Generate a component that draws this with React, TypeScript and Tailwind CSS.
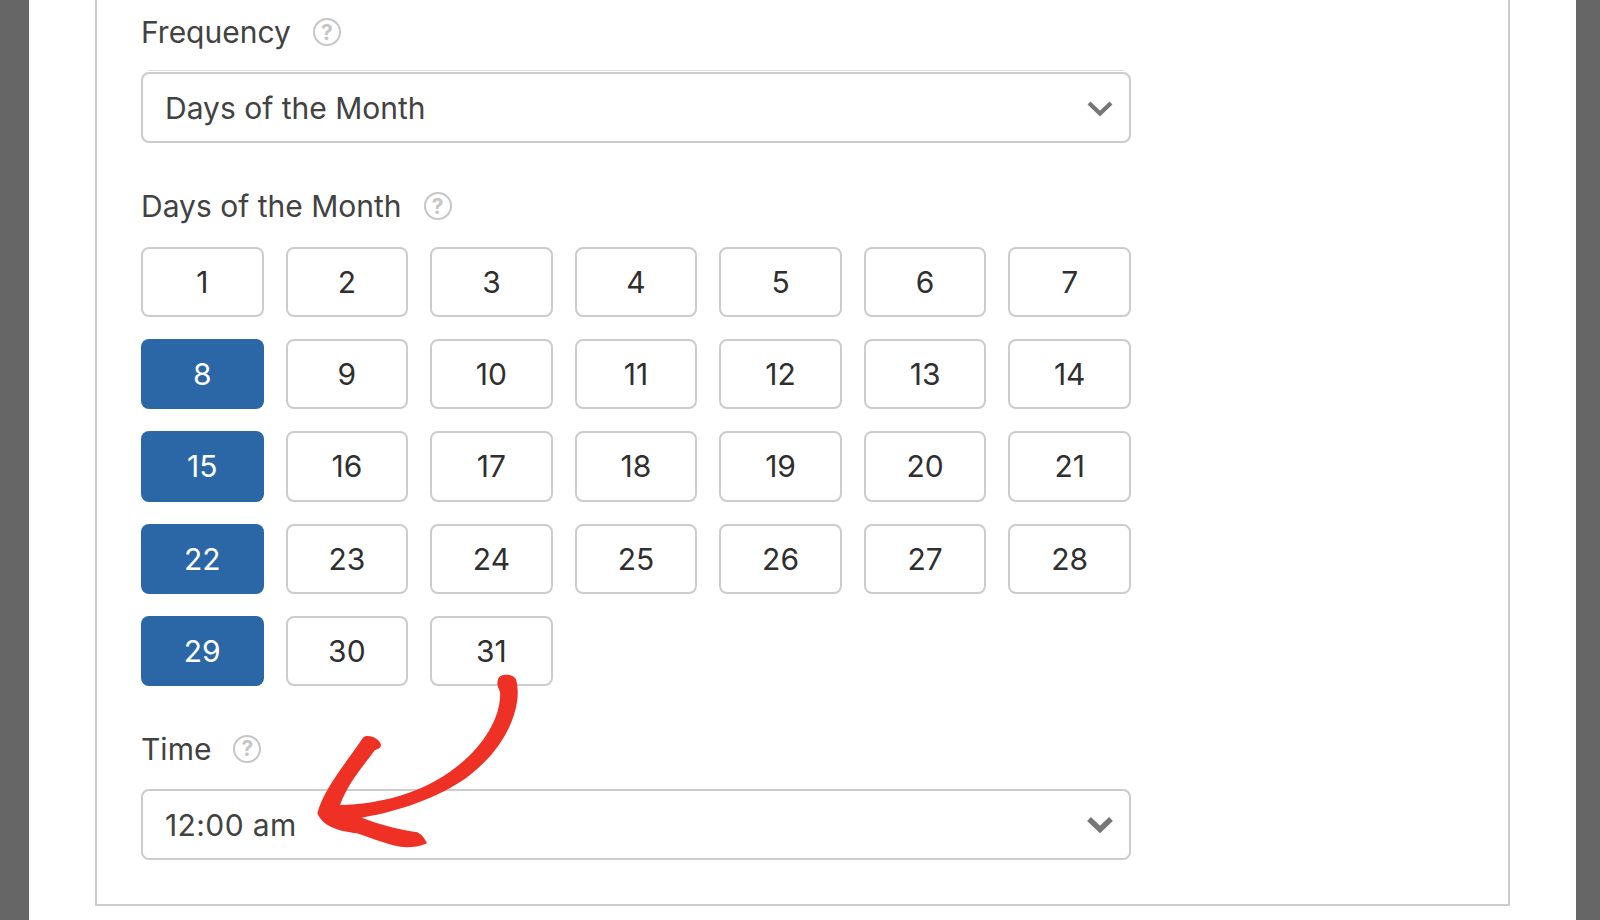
const days = Array.from({ length: 31 }, (_, i) => i + 1);
const selected = [8, 15, 22, 29];

function Help() {
  return (
    <span className="ml-[22px] flex h-[28px] w-[28px] items-center justify-center rounded-full border-[2.5px] border-[#c6c6c6] text-[21px] font-bold leading-none text-[#c6c6c6]">
      ?
    </span>
  );
}

function Label({ text }: { text: string }) {
  return (
    <div className="flex h-[36px] items-center text-[30px] leading-none text-[#424242]">
      <span>{text}</span>
      <Help />
    </div>
  );
}

function Select({ value, chevronWidth, valueClass }: { value: string; chevronWidth: number; valueClass?: string }) {
  return (
    <div className="flex h-[71px] items-center justify-between rounded-lg border-2 border-[#cccccc] bg-white pl-[22px] pr-[15px] pt-[2px] text-[30px] text-[#424242]">
      <span className={valueClass}>{value}</span>
      <svg width="28" height="18" viewBox="0 0 28 18" fill="none">
        <path d="M3 3 L14 13.5 L25 3" stroke="#777777" strokeWidth={chevronWidth} />
      </svg>
    </div>
  );
}

export default function App() {
  return (
    <div className="relative flex h-[920px] w-[1600px] overflow-hidden bg-[#666666] font-['Inter','Liberation_Sans',sans-serif]">
      <div className="ml-[29px] h-full w-[1547px] bg-white pl-[66px] pr-[66px]">
        <div className="w-[1415px] border-x-2 border-b-2 border-[#cccccc] px-[44px] pb-[44px] pt-[14px]">
          <div className="w-[990px]">
            <Label text="Frequency" />
            <div className="mx-[7px] mt-[20px] mb-px h-px bg-[#d8dfe5]" />
            <Select value="Days of the Month" chevronWidth={4.2} />

            <div className="mt-[45px]">
              <Label text="Days of the Month" />
            </div>
            <div className="mt-[22.5px] grid grid-cols-7 gap-x-[22px] gap-y-[22px]">
              {days.map((day) => (
                <div
                  key={day}
                  className={
                    selected.includes(day)
                      ? "flex h-[70.4px] items-center justify-center rounded-lg bg-[#2b67a6] pt-[1px] text-[30px] text-white"
                      : "flex h-[70.4px] items-center justify-center rounded-lg border-2 border-[#cccccc] bg-white pt-[1px] text-[30px] text-[#2f2f2f]"
                  }
                >
                  {day}
                </div>
              ))}
            </div>

            <div className="mt-[44.5px]">
              <Label text="Time" />
            </div>
            <div className="mt-[22px]">
              <Select value="12:00 am" chevronWidth={5.5} valueClass="tracking-[0.4px]" />
            </div>
          </div>
        </div>
      </div>

      <svg className="absolute left-[280px] top-[650px]" width="300" height="230" viewBox="0 0 900 690">
        <path
          fill="#ee3124"
          d="M655 85 C660 72 695 68 708 88 C714 110 714 130 712 150 C700 240 640 320 570 375 C500 430 380 480 245 503 C300 525 360 538 412 547 C425 553 436 568 441 580 C420 590 400 592 380 592 C330 590 280 565 230 550 C190 545 130 535 112 490 C130 420 190 350 250 262 C265 250 300 265 303 285 C303 293 295 298 285 300 C240 360 205 400 180 465 C300 462 430 430 530 350 C610 290 665 200 660 125 C652 110 650 100 655 85 Z"
        />
      </svg>
    </div>
  );
}
